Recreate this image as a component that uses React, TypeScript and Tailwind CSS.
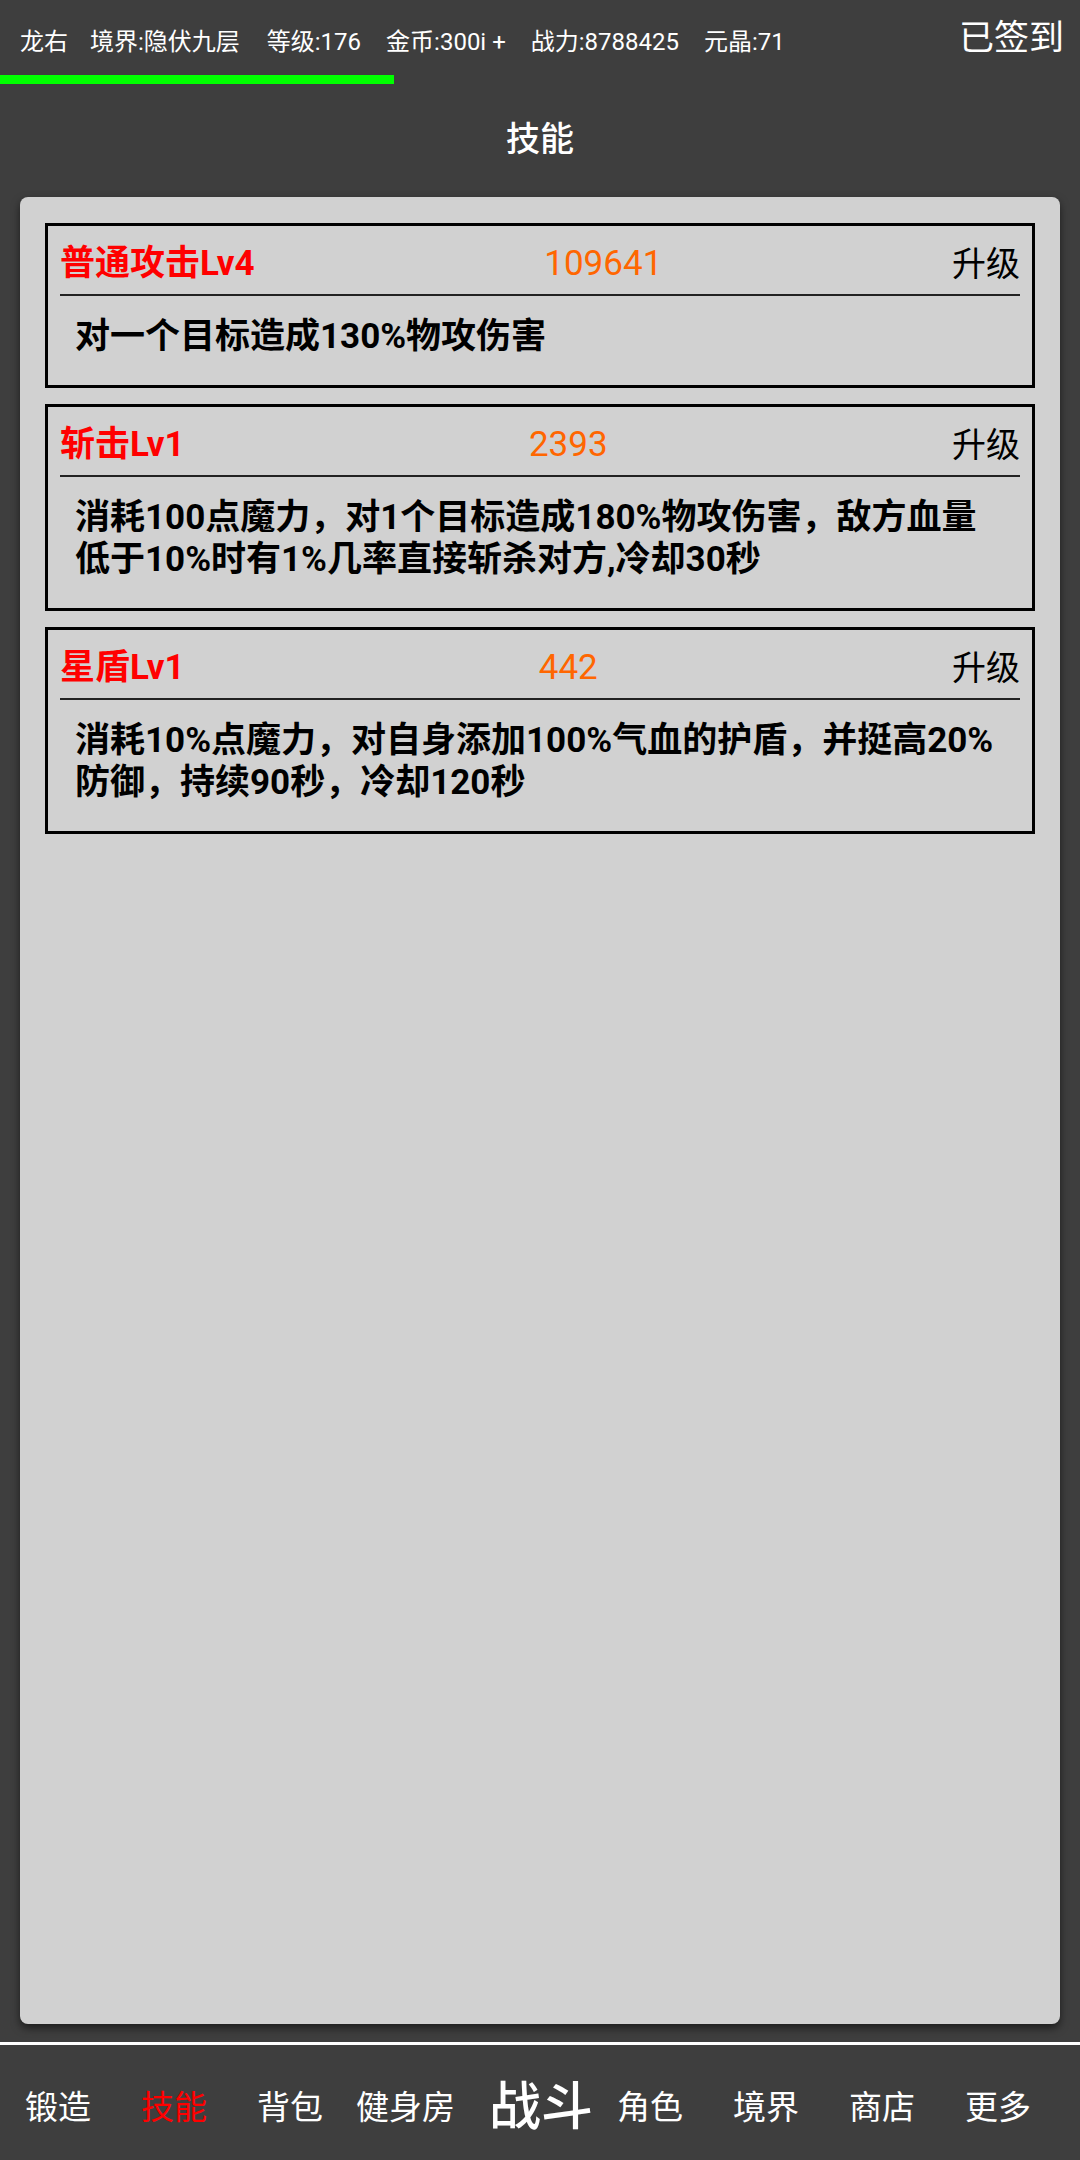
import React from "react";

const FONT = { fontFamily: '"Roboto", "Noto Sans CJK SC", sans-serif' };

const stats = [
  { text: "龙右", ml: "ml-[20px]" },
  { text: "境界:隐伏九层", ml: "ml-[22px]" },
  { text: "等级:176", ml: "ml-[27px]" },
  { text: "金币:300i +", ml: "ml-[25px]" },
  { text: "战力:8788425", ml: "ml-[25px]" },
  { text: "元晶:71", ml: "ml-[25px]" },
];

const skills = [
  { name: "普通攻击Lv4", cost: "109641", desc: "对一个目标造成130%物攻伤害" },
  {
    name: "斩击Lv1",
    cost: "2393",
    desc: "消耗100点魔力，对1个目标造成180%物攻伤害，敌方血量低于10%时有1%几率直接斩杀对方,冷却30秒",
  },
  {
    name: "星盾Lv1",
    cost: "442",
    desc: "消耗10%点魔力，对自身添加100%气血的护盾，并挺高20%防御，持续90秒，冷却120秒",
  },
];

const navItems = [
  { label: "锻造", ml: "ml-[25px]" },
  { label: "技能", ml: "ml-[50px]", active: true },
  { label: "背包", ml: "ml-[50px]" },
  { label: "健身房", ml: "ml-[33px]" },
  { label: "战斗", ml: "ml-[34px]", big: true },
  { label: "角色", ml: "ml-[24px]" },
  { label: "境界", ml: "ml-[50px]" },
  { label: "商店", ml: "ml-[50px]" },
  { label: "更多", ml: "ml-[50px]" },
];

function SkillCard({ name, cost, desc }: { name: string; cost: string; desc: string }) {
  return (
    <div className="border-[3px] border-black">
      <div className="mx-[12px] flex items-center pt-[17px] pb-[9px] leading-[42px]">
        <span className="text-[35px] font-bold text-[#ff0000]">{name}</span>
        <span className="flex-1 text-center text-[35px] text-[#ff6600]">{cost}</span>
        <span className="text-[34px] text-black">升级</span>
      </div>
      <div className="mx-[12px] h-[2px] bg-[#222]" />
      <div className="pl-[27px] pr-[32px] pt-[20px] pb-[27px] text-[35px] font-bold leading-[42px] text-black">
        {desc}
      </div>
    </div>
  );
}

export default function App() {
  return (
    <div className="flex h-[2160px] w-[1080px] flex-col bg-[#3e3e3e]" style={FONT}>
      <div className="flex h-[75px] items-start text-white">
        <div className="mt-[26px] flex text-[24px] leading-[32px]">
          {stats.map((s) => (
            <span key={s.text} className={`${s.ml} whitespace-pre`}>
              {s.text}
            </span>
          ))}
        </div>
        <span className="ml-auto mr-[16px] mt-[17px] text-[35px] leading-[44px]">已签到</span>
      </div>
      <div className="h-[9px] w-[394px] bg-[#00ff00]" />
      <div className="mt-[31px] mb-[34px] text-center text-[34px] font-medium leading-[48px] text-white">技能</div>

      <div className="mx-[20px] flex flex-1 flex-col gap-[16px] rounded-[8px] bg-[#d1d1d1] px-[25px] pt-[26px] shadow-[0_4px_8px_rgba(0,0,0,0.55)]">
        {skills.map((s) => (
          <SkillCard key={s.name} {...s} />
        ))}
      </div>

      <div className="mt-[18px] h-[3px] bg-white" />
      <div className="flex h-[115px] items-center pt-[10px] text-white">
        {navItems.map((n) => (
          <span
            key={n.label}
            className={`${n.ml} ${n.big ? "text-[52px] leading-[60px] font-medium" : "text-[33px] leading-[40px]"} ${
              n.active ? "text-[#ff0000]" : "text-white"
            }`}
          >
            {n.label}
          </span>
        ))}
      </div>
    </div>
  );
}
